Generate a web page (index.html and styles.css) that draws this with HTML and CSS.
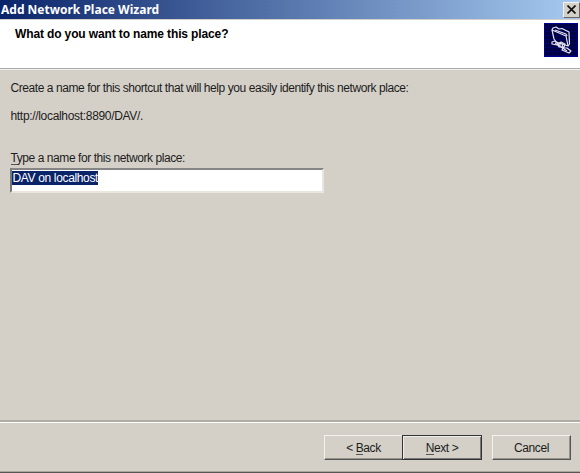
FILE: index.html
```html
<!DOCTYPE html>
<html lang="en">
<head>
<meta charset="utf-8">
<title>Add Network Place Wizard</title>
<link rel="stylesheet" href="styles.css">
</head>
<body>
<div class="window">
  <div class="titlebar">
    <span class="title">Add Network Place Wizard</span>
    <button class="close" aria-label="Close">
      <svg width="9" height="9" viewBox="0 0 9 9"><path d="M0.5 0.5L8.5 8.5M8.5 0.5L0.5 8.5" stroke="#111" stroke-width="1.7"/></svg>
    </button>
  </div>
  <div class="header">
    <h1 class="heading">What do you want to name this place?</h1>
    <svg class="icon" width="34" height="34" viewBox="0 0 34 34">
      <defs><pattern id="grid" width="4" height="4" patternUnits="userSpaceOnUse"><rect width="4" height="4" fill="#00003c"/><path d="M0 .5H4M.5 0V4" stroke="#000064"/></pattern></defs>
      <rect width="34" height="34" fill="url(#grid)"/>
      <rect x=".5" y=".5" width="33" height="33" fill="none" stroke="#000090"/>
      <g fill="none" stroke="#e4e4f0" stroke-width="1.2" stroke-linejoin="round">
        <path d="M8 7L10 16L12 19L24 23L22 13Z"/>
        <path d="M8 7L9 5L12 4L15 6L18 5.5L25 9L25.500 21L24 23M11 7L22 11L23 13"/>
        <path d="M8 19L11 18L14 20L13 22L8 21ZM14 22L17 19L21 21L20 24L15 24ZM19 25L23 25L27 28L25 30L18 27Z"/>
        <path d="M16 19V24M18 20L19 26M11 20L23 28"/>
      </g>
    </svg>
  </div>
  <div class="content">
    <p class="intro">Create a name for this shortcut that will help you easily identify this network place:</p>
    <p class="url">http://localhost:8890/DAV/.</p>
    <p class="label"><u>T</u>ype a name for this network place:</p>
    <div class="field"><span class="selected">DAV on localhost</span></div>
  </div>
  <div class="footer">
    <button class="btn back"><span>&lt; <u>B</u>ack</span></button>
    <button class="btn next"><span><u>N</u>ext &gt;</span></button>
    <button class="btn cancel"><span>Cancel</span></button>
  </div>
</div>
</body>
</html>
```
FILE: styles.css
```css
* { box-sizing: border-box; }
body { margin: 0; font: 12px/14px "Liberation Sans", Arial, sans-serif; color: #1c1c1c; }
p, h1 { margin: 0; white-space: nowrap; }
button { font: inherit; color: inherit; padding: 0; border-radius: 0; }
u { text-decoration: none; box-shadow: 0 -1px 0 #555 inset; }
.window {
  width: 580px; height: 473px; display: flex; flex-direction: column;
  background: #d4d0c8; border-bottom: 1px solid #555; box-shadow: inset 0 -1px #aaa69f;
}
.titlebar {
  height: 19px; display: flex; align-items: center; justify-content: space-between;
  background: linear-gradient(90deg, #0a246a, #a6caf0); padding-left: 1px;
}
.title { font: bold 12px/18px "Noto Sans", "Open Sans", sans-serif; color: #fff; }
.close {
  width: 17px; height: 16px; display: flex; align-items: center; justify-content: center;
  background: #d4d0c8; border: 1px solid; border-color: #f4f2ee #666 #666 #f4f2ee;
}
.header {
  height: 51px; display: flex; justify-content: space-between; padding: 3px 2px 0 15px;
  background: #fff; border-top: 1px solid #d4d0c8; border-bottom: 1px solid #f4f2ee; box-shadow: inset 0 -1px #aaa;
}
.heading { font-size: 12px; line-height: 14px; margin-top: 4px; color: #000; letter-spacing: -0.13px; }
.content { flex: 1; padding: 11px 0 0 10px; letter-spacing: -0.43px; }
.intro, .url, .label { padding-left: 0.5px; }
.url { margin-top: 14px; letter-spacing: -0.32px; }
.label { margin-top: 28px; }
.field {
  width: 314px; height: 25px; margin-top: 3px; background: #fff;
  border: 2px solid; border-color: #858585 #e9e6e0 #e9e6e0 #777;
}
.selected {
  display: block; width: 86px; height: 14px; line-height: 14px; margin-top: 1px;
  padding-left: 0.5px; white-space: nowrap; background: #0a246a; color: #fff; letter-spacing: -0.35px;
}
.footer {
  height: 52px; display: flex; align-items: flex-start; padding: 13px 9px 0 0; justify-content: flex-end;
  border-top: 2px solid #b0ada6; box-shadow: inset 0 1px #fff;
}
.btn {
  width: 79px; height: 25px; background: #d4d0c8; letter-spacing: -0.43px;
  border: 1px solid; border-color: #f4f2ee #555 #555 #f4f2ee; box-shadow: inset -1px -1px #96938d;
}
.back { width: 78px; border-right: 0; box-shadow: inset 0 -1px #96938d; }
.next { width: 80px; border: 1px solid #333; box-shadow: inset 1px 1px #eee, inset -1px -1px #777; }
.cancel { margin-left: 10px; }
```
